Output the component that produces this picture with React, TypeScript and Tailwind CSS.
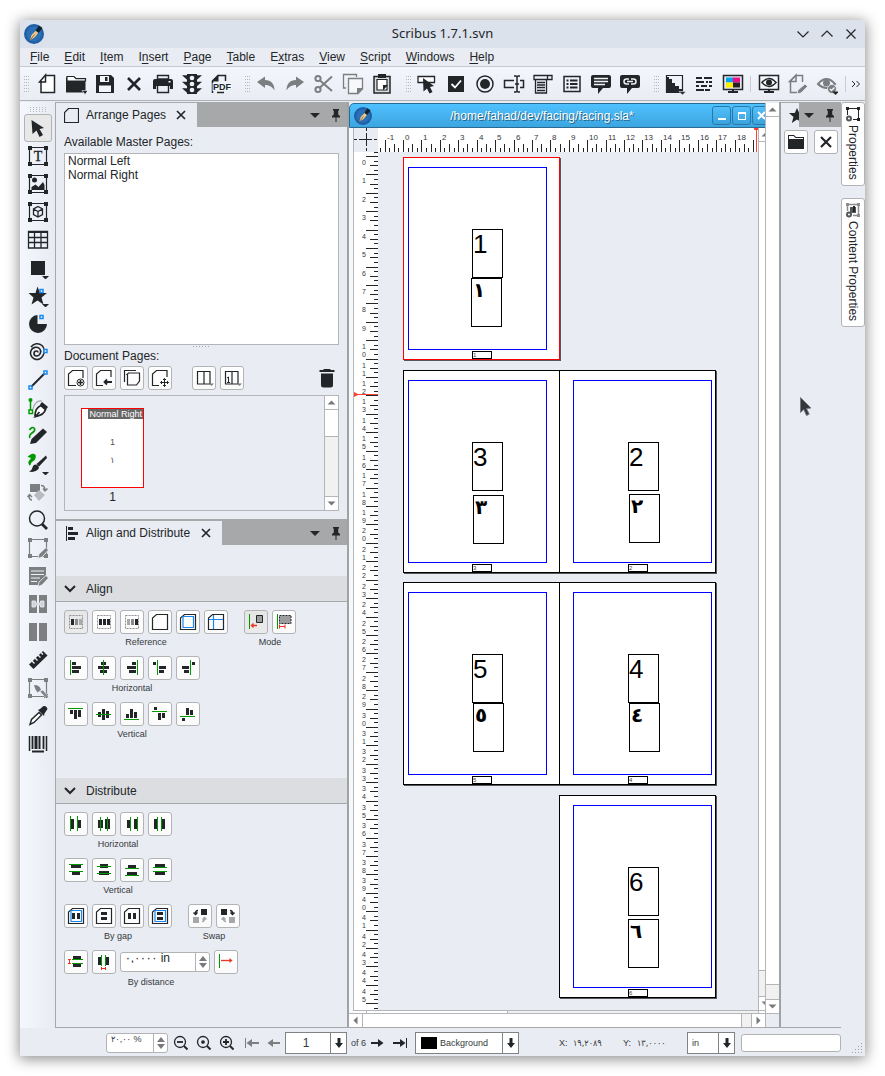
import React from "react";

const INK = "#232629";
const GRAY = "#7c7e80";
const GREEN = "#009a00";
const BLUE = "#1688f0";
const RED = "#ee3322";
const PALE = "#a6a7a9";

type Block = [string, number, number, number, number];

/* ---------- shared drawing helpers ---------- */

const Blocks = ({ items }: { items: Block[] }) => (
    <g shapeRendering="crispEdges">
        {items.map(([fill, x, y, w, h], i) => (
            <rect key={i} x={x} y={y} width={w} height={h} fill={fill} />
        ))}
    </g>
);

const Glyph = ({ children }: { children: React.ReactNode }) => (
    <svg
        width="22"
        height="22"
        viewBox="0 0 22 22"
        fill="none"
        stroke={INK}
        strokeWidth="1.5"
        className="shrink-0"
        aria-hidden="true"
    >
        {children}
    </svg>
);

const Handle = ({ x, y }: { x: number; y: number }) => (
    <rect x={x - 1.5} y={y - 1.5} width="3" height="3" fill="#fff" stroke={BLUE} strokeWidth="1.5" />
);

const FrameBox = ({ color = INK, children }: { color?: string; children?: React.ReactNode }) => (
    <g>
        <path d="M2.5 2.5H19.5V19.5H2.5Z" stroke={color} strokeWidth="1.2" />
        <path
            d="M1 1h4v4H1zM17 1h4v4h-4zM1 17h4v4H1zM17 17h4v4h-4z"
            fill={color}
            stroke="none"
        />
        {children}
    </g>
);

const Pencil = ({ color = GRAY }: { color?: string }) => (
    <path d="M11 21.5l1-4.5 7-6.5 2.5 2.5-6.5 7z" fill={color} stroke="#eef1f7" strokeWidth="0.8" />
);

const MoreArrow = () => <path d="M15 19h7l-3.500 3.500z" fill={INK} stroke="none" />;

const Feather = ({ size }: { size: number }) => (
    <svg width={size} height={size} viewBox="0 0 20 20" className="shrink-0" aria-hidden="true">
        <circle cx="10" cy="10" r="10" fill="#1f5fa5" />
        <circle cx="10" cy="10" r="7.500" fill="#2b6fb6" />
        <path d="M6 16.500L7.500 11L12 6.500L14.500 8.500L11 13Z" fill="#f0c987" />
        <path d="M6 16.500L10.500 10.500" stroke="#7b5a2c" strokeWidth="0.8" />
        <path d="M11.500 6.500L15 1.500L18.500 4L14.500 9Z" fill="#14202c" />
    </svg>
);

const Caret = () => (
    <svg width="10" height="5" viewBox="0 0 10 5" aria-hidden="true">
        <path d="M0 0h10L5 5z" fill={INK} />
    </svg>
);

const Pin = () => (
    <svg width="8" height="13" viewBox="0 0 8 13" aria-hidden="true">
        <path d="M1 0h6v1.500H6.200V5.500L8 7v1.500H0V7L1.800 5.500V1.500H1zM3.500 8.500h1V13h-1z" fill={INK} />
    </svg>
);

const Cross = () => (
    <svg width="10" height="10" viewBox="0 0 10 10" aria-hidden="true">
        <path d="M1 1l8 8M9 1L1 9" stroke={INK} strokeWidth="1.700" />
    </svg>
);

/* ---------- main toolbar ---------- */

const fileTools: [string, React.ReactNode][] = [
    ["New", <path d="M9.500 2.500H18.500V19.500H5V8M3.500 9L9.500 2V9Z" fill="#fff" key="a" />],
    [
        "Open",
        <g key="a">
            <path d="M1 4.500h8l2 2h9.500v13H1z" fill={INK} stroke="none" />
            <path d="M2 3.500h7l2 2.200h9.500V8H2z" fill="#fff" strokeWidth="1.2" />
            <path d="M17 17.500h6l-3 4z" fill={INK} stroke="#f0f3f9" strokeWidth="0.600" />
        </g>,
    ],
    [
        "Save",
        <g key="a">
            <path d="M2 2h15l3 3v15H2z" fill={INK} stroke="none" />
            <path d="M6 3h9v6H6zM5 12.500h12V19H5z" fill="#f2f5fa" stroke="none" />
            <path d="M11 4h2.500v4H11z" fill={INK} stroke="none" />
        </g>,
    ],
    ["Close", <path d="M5 5l12 12M17 5L5 17" strokeWidth="2.600" key="a" />],
    [
        "Print",
        <g key="a">
            <path d="M5.500 2.500h11V6h-11z" strokeWidth="1.400" />
            <path d="M1 8q0-2 2-2h16q2 0 2 2v8h-3v-3H4v3H1z" fill={INK} stroke="none" />
            <path d="M5.500 13v6.500h11V13" strokeWidth="1.400" />
            <path d="M16.500 8h2v1.500h-2z" fill="#fff" stroke="none" />
        </g>,
    ],
    [
        "Preflight",
        <g key="a">
            <path d="M6 1h10v20H6z" fill={INK} stroke="none" />
            <path d="M3 3h4v3.500zM3 9.500h4V13zM3 16h4v3.500zM19 3h-4v3.500zM19 9.500h-4V13zM19 16h-4v3.500z" fill={INK} />
            <circle cx="11" cy="5" r="2.300" fill="#eef1f7" stroke="none" />
            <circle cx="11" cy="11" r="2.300" fill="#eef1f7" stroke="none" />
            <circle cx="11" cy="17" r="2.300" fill="#eef1f7" stroke="none" />
        </g>,
    ],
    [
        "Export PDF",
        <g key="a">
            <path d="M2.500 20V8L8 2.500H15.500V8" />
            <path d="M1.500 8.500L8.500 1.500V8.500Z" fill={INK} stroke="none" />
            <path d="M7 19.500h7" />
            <text
                x="3"
                y="17"
                fontSize="9"
                fontWeight="700"
                fontFamily="Liberation Sans, sans-serif"
                fill={INK}
                stroke="#f2f5fa"
                strokeWidth="2"
                paintOrder="stroke"
            >
                PDF
            </text>
        </g>,
    ],
];

const editTools: [string, React.ReactNode][] = [
    ["Undo", <path d="M2 9L10 3.500V7C16 7 19.500 11 19.500 17.500C17 13.500 14 12 10 12V15Z" fill={GRAY} stroke="none" key="a" />],
    ["Redo", <path d="M20 9L12 3.500V7C6 7 2.500 11 2.500 17.500C5 13.500 8 12 12 12V15Z" fill={GRAY} stroke="none" key="a" />],
    [
        "Cut",
        <g stroke={GRAY} strokeWidth="2" key="a">
            <circle cx="5" cy="5.500" r="2.600" />
            <circle cx="5" cy="16.500" r="2.600" />
            <path d="M7 7.500L19 18M7 14.500L19 3.500" />
        </g>,
    ],
    [
        "Copy",
        <g stroke={GRAY} strokeWidth="1.300" key="a">
            <path d="M4 15H1.500V1.500H14.500V4" />
            <path d="M6.500 5.500H20.500V16L16 20.500H6.500Z" fill="#f6f8fc" />
            <path d="M21 15l-6 6v-6z" fill={GRAY} stroke="none" />
        </g>,
    ],
    [
        "Paste",
        <g key="a">
            <path d="M3 3.500H19V20H3Z" fill="#d8dade" />
            <path d="M6 6.500H16V17H6Z" fill="#fff" strokeWidth="1.200" />
            <path d="M7 1h8v4H7zM17 12l-5 5.500v-5.500z" fill={INK} stroke="none" />
        </g>,
    ],
];

const pdfTools: [string, React.ReactNode][] = [
    [
        "Push Button",
        <g key="a">
            <path d="M2 3.500H18.500V9.500H2Z" fill="#fff" strokeWidth="1.300" />
            <path d="M7 5l11 8-4 1 2.500 5-3 1.500-2.500-5-3.500 3z" fill={INK} stroke="none" />
        </g>,
    ],
    [
        "Check Box",
        <g key="a">
            <path d="M3 3h16v16H3z" fill={INK} stroke="none" />
            <path d="M6.500 11l3.500 3.500 6-7" stroke="#fff" strokeWidth="1.800" />
        </g>,
    ],
    [
        "Radio Button",
        <g key="a">
            <circle cx="11" cy="11" r="8" />
            <circle cx="11" cy="11" r="5" fill={INK} stroke="none" />
        </g>,
    ],
    [
        "Text Field",
        <g key="a">
            <path d="M11 7.500H1.500V14.500H11M17 7.500h3.500v7H17M14 4v14M11 3h2l1 1 1-1h2M11 19h2l1-1 1 1h2M12 11h4" />
        </g>,
    ],
    [
        "Combo Box",
        <g key="a">
            <path d="M2 2.500H20V6.500H2ZM15.500 2.500v4M3.500 6.500V20H14.500V6.500" strokeWidth="1.300" />
            <path d="M5 9.500h8M5 12h8M5 14.500h8M5 17.500h8" strokeWidth="1.500" />
        </g>,
    ],
    [
        "List Box",
        <g key="a">
            <path d="M3 3.500H19V18.500H3Z" />
            <path d="M5.500 7.500h2M5.500 11h2M5.500 14.500h2M9 7.500h7.500M9 11h7.500M9 14.500h7.500" strokeWidth="2" />
        </g>,
    ],
    [
        "Text Annotation",
        <g key="a">
            <path d="M3 2h16q2 0 2 2v9q0 2-2 2h-6l-5 6v-6H3q-2 0-2-2V4q0-2 2-2z" fill={INK} stroke="none" />
            <path d="M4 5.500h14M4 8.500h14M4 11.500h11" stroke="#eef1f7" strokeWidth="1.300" />
        </g>,
    ],
    [
        "Link Annotation",
        <g key="a">
            <path d="M3 2h16q2 0 2 2v9q0 2-2 2h-6l-5 6v-6H3q-2 0-2-2V4q0-2 2-2z" fill={INK} stroke="none" />
            <path
                d="M10 6H7.500a2.500 2.500 0 0 0 0 5H10M12 6h2.500a2.500 2.500 0 0 1 0 5H12M8 8.500h6"
                stroke="#eef1f7"
                strokeWidth="1.500"
            />
        </g>,
    ],
];

const viewTools: [string, React.ReactNode][] = [
    [
        "Image Visibility",
        <g key="a">
            <path d="M2.500 2.500H18.500V19.500H2.500Z" strokeWidth="1.200" />
            <path d="M2 4h3v2h3v4h3v3h4v3h3v4H2z" fill={INK} stroke="none" />
            <path d="M15 18.500h7l-3.500 3.500z" fill={INK} stroke="#f0f3f9" strokeWidth="0.600" />
        </g>,
    ],
    [
        "Baseline Grid",
        <path
            d="M3 5h6M11 5h8M3 9h8M13 9h2M16 9h3M3 13h3M8 13h6M16 13h3M3 17h8M12 17h5"
            strokeWidth="2.200"
            key="a"
        />,
    ],
    [
        "Color Management",
        <g key="a">
            <path d="M1.500 2.500H20.500V16.500H1.500Z" fill="#e4e7ec" />
            <path d="M4 4.500h7v5H4z" fill="#00a4f0" stroke="none" />
            <path d="M11 4.500h7v5h-7z" fill="#ee0a8a" stroke="none" />
            <path d="M4 9.500h7v5H4z" fill="#ffee00" stroke="none" />
            <path d="M11 9.500h7v5h-7z" fill="#222" stroke="none" />
            <path d="M6 19h10M11 16v3" strokeWidth="2" />
        </g>,
    ],
];

const previewTools: [string, React.ReactNode][] = [
    [
        "Preview Mode",
        <g key="a">
            <path d="M1.500 2.500H20.500V16.500H1.500Z" fill="#f4f6fa" />
            <path d="M4 9.500Q11 1.500 18 9.500Q11 17.500 4 9.500Z" strokeWidth="1.600" />
            <circle cx="11" cy="9.500" r="3" fill={INK} stroke="none" />
            <path d="M6 19h10M11 16v3" strokeWidth="2" />
        </g>,
    ],
    [
        "Edit in Preview",
        <g stroke={GRAY} key="a">
            <path d="M10 19.500H3.500V8L9 2.500H15.500V9M2.500 8.500L9 2V8.500Z" />
            <path d="M10 21l1-4 7-6 2.500 2.500-6.500 6.500z" fill={GRAY} stroke="#eef1f7" strokeWidth="0.800" />
        </g>,
    ],
    [
        "Display Mode",
        <g key="a">
            <path d="M2 11Q10.500 1 19 11Q10.500 19 2 11Z" stroke={GRAY} strokeWidth="2" />
            <circle cx="10.500" cy="10" r="3.500" fill={GRAY} stroke="none" />
            <circle cx="16" cy="16" r="4.500" fill={GRAY} stroke="#eef1f7" strokeWidth="0.800" />
            <path d="M14 16l1.500 1.500 3-3" stroke="#fff" strokeWidth="1.200" />
            <path d="M16 18.500h7l-3.500 3.500z" fill={INK} stroke="none" />
        </g>,
    ],
];

const ToolRow = ({ tools }: { tools: [string, React.ReactNode][] }) => (
    <>
        {tools.map(([name, glyph]) => (
            <button
                key={name}
                type="button"
                aria-label={name}
                className="w-[29px] h-7 shrink-0 flex items-center justify-center"
            >
                <Glyph>{glyph}</Glyph>
            </button>
        ))}
    </>
);

const Grip = () => (
    <svg width="5" height="18" viewBox="0 0 5 18" aria-hidden="true" shapeRendering="crispEdges">
        <path d="M0.500 1v17M2.500 1v17M4.500 1v17" stroke="#b4b7bc" strokeDasharray="1 2" />
    </svg>
);

const MainToolbar = () => (
    <div
        role="toolbar"
        className="h-[34px] flex items-center overflow-hidden bg-gradient-to-b from-[#f3f6fc] to-[#e9ecf2] border-b border-[#aeb1b5]"
    >
        <span className="w-3 shrink-0 flex justify-center">
            <Grip />
        </span>
        <ToolRow tools={fileTools} />
        <span className="w-4 shrink-0 flex justify-end pr-px">
            <Grip />
        </span>
        <ToolRow tools={editTools} />
        <span className="w-4 shrink-0 flex justify-end pr-px">
            <Grip />
        </span>
        <ToolRow tools={pdfTools} />
        <span className="w-4 shrink-0 flex justify-end pr-px">
            <Grip />
        </span>
        <ToolRow tools={viewTools} />
        <span className="w-[7px] shrink-0 flex justify-center">
            <span className="w-px h-4 bg-[#c9ccd1]" />
        </span>
        <ToolRow tools={previewTools} />
        <span className="w-px h-4 shrink-0 bg-[#c9ccd1] ml-1" />
        <button type="button" aria-label="More tools" className="px-[5px] shrink-0">
            <svg width="10" height="8" viewBox="0 0 10 8" fill="none" stroke={INK} aria-hidden="true">
                <path d="M1 1l3 3-3 3M5.500 1l3 3-3 3" />
            </svg>
        </button>
    </div>
);

/* ---------- toolbox ---------- */

const toolbox: [string, React.ReactNode][] = [
    ["Select Item", <path d="M4.500 3L17 11l-4.500 1 3.500 6-3.500 2L9.500 13.500 5.500 17z" fill={INK} stroke="none" key="a" />],
    [
        "Text Frame",
        <FrameBox key="a">
            <text
                x="11"
                y="16"
                fontSize="14"
                textAnchor="middle"
                fontFamily="Liberation Serif, serif"
                fill={INK}
                strokeWidth="0.300"
            >
                T
            </text>
        </FrameBox>,
    ],
    [
        "Image Frame",
        <FrameBox key="a">
            <circle cx="7.500" cy="7" r="2.500" fill={INK} stroke="none" />
            <path d="M4.500 17v-3l4-2.500 3 2.500 4.500-5 1.500 3v5z" fill={INK} stroke="none" />
        </FrameBox>,
    ],
    [
        "Render Frame",
        <FrameBox key="a">
            <path d="M11 5.500l4.500 2.500v5.500L11 16l-4.500-2.500V8zM6.500 8l4.500 2.500L15.500 8M11 10.500V16" strokeWidth="1.300" />
        </FrameBox>,
    ],
    [
        "Table",
        <g key="a">
            <path d="M1.500 2.500H20.500V19H1.500ZM1.500 8.500h19M1.500 13.500h19M7.500 3v16M14 3v16" strokeWidth="1.300" />
            <path d="M1 3h20" strokeWidth="2" />
        </g>,
    ],
    [
        "Shape",
        <g key="a">
            <path d="M4 4h14v14H4z" fill={INK} stroke="none" />
            <MoreArrow />
        </g>,
    ],
    [
        "Polygon",
        <g key="a">
            <path
                d="M10.500 1.500l2.500 6.500h7l-5.500 4.500 2 7-6-4-6 4 2-7L1.500 8h7z"
                fill={INK}
                stroke="none"
            />
            <Handle x={14.500} y={6} />
            <MoreArrow />
        </g>,
    ],
    [
        "Arc",
        <g key="a">
            <path d="M10.500 2v9H20a9 9 0 1 1-9.500-9z" fill={INK} stroke="none" />
            <Handle x={14.500} y={4} />
        </g>,
    ],
    [
        "Spiral",
        <g key="a">
            <path
                d="M11 11.500a1.500 1.500 0 0 0-1.500-1.500a2.500 2.500 0 0 0 0 5a4.500 4.500 0 0 0 3-7.500a5.500 5.500 0 0 0-8.500 2a6.500 6.500 0 0 0 12 5a8 8 0 0 0-1-10a7.500 7.500 0 0 0-11 1.500"
                strokeWidth="1.600"
            />
            <Handle x={18.500} y={10} />
        </g>,
    ],
    [
        "Line",
        <g key="a">
            <path d="M4 18L18 4" strokeWidth="2" />
            <Handle x={3.500} y={18.500} />
            <Handle x={18.500} y={3.500} />
        </g>,
    ],
    [
        "Bezier Curve",
        <g key="a">
            <path d="M3.500 4v10" stroke={GREEN} strokeWidth="1.500" />
            <circle cx="3.500" cy="3" r="2" fill={GREEN} stroke="none" />
            <path d="M2 13h3.500v3.500H2z" fill="#fff" stroke={GREEN} />
            <path d="M6 12Q8 3 15 4" stroke={PALE} strokeWidth="1.200" />
            <path d="M8 19Q8 11 14 8.500l4.500 4Q17 18 8.500 19.500L12.500 15" fill="#fff" strokeWidth="1.800" />
            <path d="M15 5l6 5-2 2.500-6-5z" fill={INK} stroke="none" />
        </g>,
    ],
    [
        "Freehand Line",
        <g key="a">
            <path d="M2.500 5Q5 1 7.500 3.500Q8.500 6 5 8Q1.500 10.500 3 13" stroke={GREEN} strokeWidth="1.600" />
            <path d="M3 19l1.500-5L16 3.500l4 3.500L9 18z" fill={INK} stroke="none" />
        </g>,
    ],
    [
        "Calligraphic Line",
        <g key="a">
            <path d="M2 3.500Q6 0 8 2.500Q8.500 6 5 8Q2.500 10 3 12Q1 9 3.500 7Q6.500 4.500 2 3.500Z" fill={GREEN} stroke={GREEN} />
            <path d="M19 2.500l1 2.500-8 8.500-2.500-2.500z" fill={INK} stroke="none" />
            <path d="M9 11.500q4 1.500 2.500 4.500Q8 20 2 18.500q3-1 3.500-4t3.500-3z" fill={INK} stroke="none" />
            <MoreArrow />
        </g>,
    ],
    [
        "Rotate Item",
        <g key="a">
            <path d="M3 3h10v8H3z" fill={GRAY} stroke="none" />
            <path d="M12 9l6 5-6 6-5-6z" fill="#b9bbbe" stroke="none" />
            <path d="M14 4.500q4 0 4 5M16 7.500l2 2.500 2.500-2.500M5 19q-3 0-3-5M0.500 16L2.500 13.500 5 16" stroke={GRAY} />
        </g>,
    ],
    [
        "Zoom",
        <g key="a">
            <circle cx="10" cy="9.500" r="7.500" />
            <path d="M15 15l5 5" strokeWidth="2.800" />
        </g>,
    ],
    [
        "Edit Contents",
        <FrameBox color={GRAY} key="a">
            <Pencil />
        </FrameBox>,
    ],
    [
        "Edit Text",
        <g key="a">
            <path d="M2 2h17v13l-5 5H2z" fill={GRAY} stroke="none" />
            <path d="M4 6h13M4 9.500h13M4 13h9M4 16.500h6" stroke="#eef1f7" strokeWidth="1.200" />
            <Pencil />
        </g>,
    ],
    [
        "Link Frames",
        <g key="a">
            <path d="M2 2h8v18H2zM12 2h8v18h-8z" fill={GRAY} stroke="none" />
            <path d="M5 8h3.500v2h5V8H17v6h-3.500v-2h-5v2H5z" fill="#cfd2d6" stroke="#eef1f7" strokeWidth="0.800" />
        </g>,
    ],
    ["Unlink Frames", <path d="M2 2h8v18H2zM12 2h8v18h-8z" fill={GRAY} stroke="none" key="a" />],
    [
        "Measurements",
        <g key="a">
            <path d="M2 15.500L16 2l4.500 4.500L6.500 20z" fill={INK} stroke="none" />
            <path d="M5 12l2.500 2.500M8 9l2.500 2.500M11 6l2.500 2.500M14 3.500L16 5.500" stroke="#eef1f7" strokeWidth="1.300" />
        </g>,
    ],
    [
        "Copy Properties",
        <FrameBox color={GRAY} key="a">
            <path d="M7 8q6 0 7 5l-3.500 2.500Q8 13 7 8z" fill={GRAY} stroke="none" />
            <path d="M13 14.500l3-1.500 5.500 7-2 1.500z" fill={GRAY} stroke="#eef1f7" strokeWidth="0.600" />
        </FrameBox>,
    ],
    [
        "Eye Dropper",
        <g key="a">
            <path d="M3 19.500l1.500-5 7.500-7 2.500 2.500-7.500 7.500z" fill="#fff" strokeWidth="1.400" />
            <path d="M11 5l2-1 3.500-3q3-0.500 4 3L17.500 8.500l-0.500 2.500z" fill={INK} stroke="none" />
        </g>,
    ],
    [
        "Barcode",
        <g key="a">
            <path d="M2.500 3v15M19.500 3v15" />
            <path d="M5.500 3v13M16.500 3v13" strokeWidth="1.800" />
            <path d="M9 3v13" strokeWidth="3" />
            <path d="M12.500 3v13" strokeWidth="2" />
            <path d="M5 18.500h12" strokeWidth="2" />
        </g>,
    ],
];

const Toolbox = () => (
    <div
        role="toolbar"
        aria-label="Tools"
        className="w-[35px] shrink-0 flex flex-col items-center bg-gradient-to-r from-[#f4f7fd] to-[#e8ebf2]"
    >
        <svg width="17" height="12" viewBox="0 0 17 12" aria-hidden="true" shapeRendering="crispEdges">
            <path d="M1 5.500h16M1 7.500h16M1 9.500h16" stroke="#b4b7bc" strokeDasharray="1 2" />
        </svg>
        {toolbox.map(([name, glyph], i) => (
            <button
                key={name}
                type="button"
                aria-label={name}
                aria-pressed={i === 0}
                className="size-7 shrink-0 flex items-center justify-center rounded-[3px] border border-transparent aria-pressed:bg-[#e8e8e8] aria-pressed:border-[#b1b3b5]"
            >
                <Glyph>{glyph}</Glyph>
            </button>
        ))}
    </div>
);

/* ---------- dock panels ---------- */

const ButtonGlyph = ({ children }: { children: React.ReactNode }) => (
    <svg width="22" height="22" viewBox="1 1 22 22" fill="none" stroke={INK} className="shrink-0" aria-hidden="true">
        {children}
    </svg>
);

const IconButton = ({
    name,
    pressed = false,
    children,
}: {
    name: string;
    pressed?: boolean;
    children: React.ReactNode;
}) => (
    <button
        type="button"
        aria-label={name}
        aria-pressed={pressed}
        className="size-6 shrink-0 flex items-center justify-center rounded-[3px] border border-[#b1b3b5] bg-gradient-to-b from-white to-[#fafafb] aria-pressed:from-[#e6e6e6] aria-pressed:to-[#ebebeb]"
    >
        <ButtonGlyph>{children}</ButtonGlyph>
    </button>
);

const PageShape = () => <path d="M4.500 19.500V8L8.500 4.500H19.500V19.500Z" strokeWidth="1.200" />;
const MarginShape = () => <path d="M7 6.500H17.500V17.500H7Z" stroke={BLUE} strokeWidth="1.200" />;

const DockTitle = ({
    title,
    width,
    children,
}: {
    title: string;
    width: string;
    children: React.ReactNode;
}) => (
    <div className="h-6 shrink-0 flex bg-[#a7a8a9]">
        <div className={`${width} bg-[#e9ecf2] flex items-center pl-2 pr-[11px]`}>
            <span className="w-[22px] shrink-0">{children}</span>
            <h2>{title}</h2>
            <button type="button" aria-label={`Close ${title}`} className="ml-auto">
                <Cross />
            </button>
        </div>
        <div className="ml-auto flex items-center gap-3 pr-[7px]">
            <button type="button" aria-label="Dock menu">
                <Caret />
            </button>
            <button type="button" aria-label="Pin dock">
                <Pin />
            </button>
        </div>
    </div>
);

const ScrollArrow = ({ dir }: { dir: "up" | "down" | "left" | "right" }) => {
    const shapes = {
        up: "M2.500 8.500h8l-4-4z",
        down: "M2.500 4.500h8l-4 4z",
        left: "M8.500 2.500v8l-4-4z",
        right: "M4.500 2.500v8l4-4z",
    };

    return (
        <button type="button" aria-label={`Scroll ${dir}`} className="size-[13px] shrink-0 bg-white">
            <svg width="13" height="13" viewBox="0 0 13 13" aria-hidden="true">
                <path d={shapes[dir]} fill="#77797c" />
            </svg>
        </button>
    );
};

const ArrangePages = () => (
    <section className="flex flex-col border-t border-[#a7a8a9]">
        <DockTitle title="Arrange Pages" width="w-[141px]">
            <svg width="15" height="15" viewBox="0 0 15 15" fill="none" stroke={INK} aria-hidden="true">
                <path d="M0.500 14.500V4.500L4.500 0.500H14.500V14.500Z" strokeWidth="1.200" />
            </svg>
        </DockTitle>
        <div className="px-2 pt-[7px]">
            <h3 className="leading-4">Available Master Pages:</h3>
            <ul className="mt-[3px] h-48 bg-white border border-[#b3b5b8] pl-[3px] leading-[14px]">
                <li>Normal Left</li>
                <li>Normal Right</li>
            </ul>
            <div className="flex justify-center h-[3px]">
                <svg width="17" height="3" viewBox="0 0 17 3" aria-hidden="true" shapeRendering="crispEdges">
                    <path d="M0 1.500h17" stroke="#a4a7ab" strokeDasharray="1 2" />
                </svg>
            </div>
            <h3 className="leading-4">Document Pages:</h3>
            <div className="flex items-center gap-1 mt-[2px]">
                <IconButton name="Insert page">
                    <path d="M12 19.500H4.500V8L8.500 4.500H19V12" strokeWidth="1.200" />
                    <circle cx="16.500" cy="16.500" r="3.500" fill="#fff" />
                    <path d="M14 16.500h5M16.500 14v5" strokeWidth="1.500" />
                </IconButton>
                <IconButton name="Import page">
                    <path d="M11 19.500H4.500V8L8.500 4.500H19V11" strokeWidth="1.200" />
                    <path d="M20 16h-7M15 13.500L12.500 16l2.500 2.500" strokeWidth="1.800" />
                </IconButton>
                <IconButton name="Duplicate page">
                    <path d="M4.500 16V4.500H16M7.500 18.500V8.500H7L8.500 7H19.500V15L16.500 19H7.500Z" strokeWidth="1.200" />
                </IconButton>
                <IconButton name="Move page">
                    <path d="M11 19.500H4.500V8L8.500 4.500H19V11" strokeWidth="1.200" />
                    <path d="M16.500 12.500v8M12.500 16.500h8M15 14l1.500-1.500L18 14M15 19l1.500 1.500L18 19M14 15l-1.500 1.500L14 18M19 15l1.500 1.500L19 18" />
                </IconButton>
                <span className="w-3" />
                <IconButton name="Page layout">
                    <path d="M5.500 5.500H18V18H5.500ZM12 5.500V18" strokeWidth="1.200" />
                    <path d="M17 17.500h5l-2.500 2.500z" fill={GRAY} stroke="none" />
                </IconButton>
                <IconButton name="First page position">
                    <path d="M5.500 5.500H18V18H5.500ZM12 5.500V18" strokeWidth="1.200" />
                    <path d="M7 12l1.500-1v5.500M7 16.500h3" />
                    <path d="M17 17.500h5l-2.500 2.500z" fill={GRAY} stroke="none" />
                </IconButton>
                <button type="button" aria-label="Delete page" className="ml-auto mr-1">
                    <svg width="16" height="20" viewBox="0 0 16 20" fill={INK} aria-hidden="true">
                        <path d="M4.500 1h7v1H15.500v2H0.500V2H4.500zM2 5.500h12V17q0 2.500-2.500 2.500h-7Q2 19.500 2 17z" />
                    </svg>
                </button>
            </div>
            <div className="mt-[5px] h-[116px] flex border border-[#b3b5b8]">
                <div className="flex-1 pl-4 pt-3">
                    <div className="w-[63px] flex flex-col items-center">
                        <div className="w-full h-20 bg-white border border-[#ff0000] flex flex-col items-end">
                            <span className="bg-[#666] text-white text-[9px] leading-[10px] px-px whitespace-nowrap">
                                Normal Right
                            </span>
                            <span className="self-center mt-[18px] text-[9px] leading-[10px] text-[#555]">1</span>
                            <span
                                lang="ar"
                                className="self-center mt-2 text-[9px] leading-[10px] text-[#555] font-['DejaVu_Sans',sans-serif]"
                            >
                                ١
                            </span>
                        </div>
                        <span className="leading-[18px]">1</span>
                    </div>
                </div>
                <div className="w-[14px] flex flex-col border-l border-[#b3b5b8]">
                    <ScrollArrow dir="up" />
                    <div className="h-7 bg-white border-y border-[#b3b5b8]" />
                    <div className="flex-1 bg-[#f1f1f1] border-b border-[#b3b5b8]" />
                    <ScrollArrow dir="down" />
                </div>
            </div>
        </div>
    </section>
);

const SectionHeader = ({ title }: { title: string }) => (
    <h3 className="h-[26px] shrink-0 bg-[#dbdde1] border-b border-[#a7a8a9]">
        <button type="button" aria-expanded="true" className="w-full h-full flex items-center pl-2">
            <svg width="12" height="8" viewBox="0 0 12 8" fill="none" stroke={INK} strokeWidth="2" aria-hidden="true">
                <path d="M1 1l5 5 5-5" />
            </svg>
            <span className="ml-[10px]">{title}</span>
        </button>
    </h3>
);

const Group = ({ label, children }: { label: string; children: React.ReactNode }) => (
    <div role="group" aria-label={label} className="flex flex-col items-center h-[46px]">
        <div className="flex items-center gap-1">{children}</div>
        <span className="text-[9px] leading-4 text-[#35393d]">{label}</span>
    </div>
);

const BlockButtons = ({ sets }: { sets: [string, Block[]][] }) => (
    <>
        {sets.map(([name, items]) => (
            <IconButton key={name} name={name}>
                <g stroke="none">
                    <Blocks items={items} />
                </g>
            </IconButton>
        ))}
    </>
);

const alignH: [string, Block[]][] = [
    ["Align left", [[INK, 8, 6, 4, 3], [INK, 8, 10, 9, 3], [INK, 8, 14, 7, 3], [GREEN, 6, 4, 1, 15]]],
    ["Align center", [[INK, 9, 6, 5, 3], [INK, 6, 10, 11, 3], [INK, 8, 14, 7, 3], [GREEN, 11, 4, 1, 15]]],
    ["Align right", [[INK, 12, 6, 4, 3], [INK, 7, 10, 9, 3], [INK, 9, 14, 7, 3], [GREEN, 17, 4, 1, 15]]],
    ["Align to right of", [[INK, 5, 6, 3, 3], [INK, 11, 10, 7, 3], [INK, 11, 14, 5, 3], [GREEN, 9, 4, 1, 15]]],
    ["Align to left of", [[INK, 16, 6, 3, 3], [INK, 6, 10, 7, 3], [INK, 8, 14, 5, 3], [GREEN, 14, 4, 1, 15]]],
];

const alignV: [string, Block[]][] = [
    ["Align top", [[INK, 6, 8, 3, 4], [INK, 10, 8, 3, 9], [INK, 14, 8, 3, 7], [GREEN, 4, 6, 15, 1]]],
    ["Align middle", [[INK, 6, 10, 3, 5], [INK, 10, 7, 3, 11], [INK, 14, 9, 3, 7], [GREEN, 4, 12, 15, 1]]],
    ["Align bottom", [[INK, 6, 12, 3, 4], [INK, 10, 7, 3, 9], [INK, 14, 10, 3, 6], [GREEN, 4, 17, 15, 1]]],
    ["Align below", [[INK, 6, 5, 3, 3], [INK, 10, 11, 3, 7], [INK, 14, 11, 3, 5], [GREEN, 4, 9, 15, 1]]],
    ["Align above", [[INK, 6, 16, 3, 3], [INK, 10, 6, 3, 7], [INK, 14, 8, 3, 5], [GREEN, 4, 14, 15, 1]]],
];

const distH: [string, Block[]][] = [
    ["Distribute lefts", [[INK, 7, 7, 3, 10], [INK, 14, 8, 3, 8], [GREEN, 6, 4, 1, 15], [GREEN, 13, 4, 1, 15]]],
    ["Distribute centers", [[INK, 6, 8, 5, 8], [INK, 13, 7, 5, 10], [GREEN, 8, 5, 1, 14], [GREEN, 15, 5, 1, 14]]],
    ["Distribute rights", [[INK, 7, 8, 3, 8], [INK, 14, 7, 3, 10], [GREEN, 10, 5, 1, 14], [GREEN, 17, 5, 1, 14]]],
    ["Equal horizontal gaps", [[INK, 6, 7, 3, 10], [INK, 14, 7, 3, 10], [GREEN, 9, 5, 1, 14], [GREEN, 13, 5, 1, 14]]],
];

const distV: [string, Block[]][] = [
    ["Distribute tops", [[INK, 7, 7, 10, 3], [INK, 8, 14, 8, 3], [GREEN, 5, 6, 14, 1], [GREEN, 5, 13, 14, 1]]],
    ["Distribute middles", [[INK, 8, 6, 8, 4], [INK, 7, 13, 10, 4], [GREEN, 5, 8, 14, 1], [GREEN, 5, 15, 14, 1]]],
    ["Distribute bottoms", [[INK, 8, 7, 8, 3], [INK, 7, 14, 10, 3], [GREEN, 5, 10, 14, 1], [GREEN, 5, 17, 14, 1]]],
    ["Equal vertical gaps", [[INK, 7, 6, 10, 3], [INK, 7, 14, 10, 3], [GREEN, 5, 9, 14, 1], [GREEN, 5, 13, 14, 1]]],
];

const distanceSets: [string, Block[]][] = [
    [
        "Vertical distance",
        [[INK, 9, 6, 8, 3], [INK, 9, 14, 8, 3], [GREEN, 8, 9, 11, 1], [GREEN, 8, 13, 11, 1], [RED, 5, 9, 1, 5], [RED, 4, 9, 3, 1], [RED, 4, 13, 3, 1]],
    ],
    [
        "Horizontal distance",
        [[INK, 6, 7, 3, 8], [INK, 14, 7, 3, 8], [GREEN, 9, 5, 1, 11], [GREEN, 13, 5, 1, 11], [RED, 9, 18, 5, 1], [RED, 9, 17, 1, 3], [RED, 13, 17, 1, 3]],
    ],
];

const SelectionShape = ({ bars }: { bars: string[] }) => (
    <>
        <path d="M5.500 5.500H18.500V18.500H5.500Z" stroke="#8d8f92" strokeDasharray="2 1" />
        <g stroke="none">
            <Blocks items={bars.map((fill, i) => [fill, 7 + i * 4, 9, 3, 6] as Block)} />
        </g>
    </>
);

const SpinArrows = () => (
    <span className="w-[14px] shrink-0 self-stretch flex flex-col items-center justify-center gap-[2px] border-l border-[#b1b3b5]">
        <button type="button" aria-label="Increase">
            <svg width="8" height="5" viewBox="0 0 8 5" className="block" aria-hidden="true">
                <path d="M0 5h8L4 0z" fill="#77797c" />
            </svg>
        </button>
        <button type="button" aria-label="Decrease">
            <svg width="8" height="5" viewBox="0 0 8 5" className="block" aria-hidden="true">
                <path d="M0 0h8L4 5z" fill="#77797c" />
            </svg>
        </button>
    </span>
);

const AlignDistribute = () => (
    <section className="flex-1 flex flex-col border-t-2 border-[#a7a8a9] mt-2">
        <DockTitle title="Align and Distribute" width="w-[166px]">
            <svg width="14" height="15" viewBox="-2 0 14 15" fill={INK} shapeRendering="crispEdges" aria-hidden="true">
                <path d="M0 0h1v15H0zM2 1h5v3H2zM2 6h10v3H2zM2 11h7v3H2z" />
            </svg>
        </DockTitle>
        <div className="mt-[31px] flex flex-col">
            <SectionHeader title="Align" />
            <div className="px-2 pt-2 flex flex-col items-start h-[176px]">
                <div className="flex gap-4">
                    <Group label="Reference">
                        <IconButton name="First selected" pressed>
                            <SelectionShape bars={[INK, "#88898b", "#a9aaac"]} />
                        </IconButton>
                        <IconButton name="Selection">
                            <SelectionShape bars={[INK, INK, INK]} />
                        </IconButton>
                        <IconButton name="Last selected">
                            <SelectionShape bars={["#a9aaac", "#88898b", INK]} />
                        </IconButton>
                        <IconButton name="Page">
                            <PageShape />
                        </IconButton>
                        <IconButton name="Margins">
                            <PageShape />
                            <MarginShape />
                        </IconButton>
                        <IconButton name="Guide">
                            <PageShape />
                            <path d="M9.500 5V19M5 9.500H19" stroke={BLUE} strokeWidth="1.200" />
                        </IconButton>
                    </Group>
                    <Group label="Mode">
                        <IconButton name="Move items" pressed>
                            <path d="M5.500 4V19" stroke={GREEN} />
                            <path d="M12.500 5.500H18.500V12.500H12.500Z" fill="#9b9c9e" />
                            <path d="M13 15.500H8M9.500 13.500l-2 2 2 2" stroke={RED} strokeWidth="1.300" />
                        </IconButton>
                        <IconButton name="Resize items">
                            <path d="M5.500 4V19" stroke={GREEN} />
                            <path d="M7.500 5.500H19V13.500H7.500Z" fill="#9b9c9e" strokeDasharray="2 1" />
                            <path d="M7.500 16.500H13M7.500 14.500v4M13 14.500v4" stroke={RED} />
                        </IconButton>
                    </Group>
                </div>
                <Group label="Horizontal">
                    <BlockButtons sets={alignH} />
                </Group>
                <Group label="Vertical">
                    <BlockButtons sets={alignV} />
                </Group>
            </div>
            <SectionHeader title="Distribute" />
            <div className="px-2 pt-2 flex flex-col items-start">
                <Group label="Horizontal">
                    <BlockButtons sets={distH} />
                </Group>
                <Group label="Vertical">
                    <BlockButtons sets={distV} />
                </Group>
                <div className="flex gap-4">
                    <Group label="By gap">
                        <IconButton name="Gap to margins, horizontal">
                            <PageShape />
                            <MarginShape />
                            <path d="M8 9h3v6H8zM13 9h3v6h-3z" fill={INK} stroke="none" />
                        </IconButton>
                        <IconButton name="Gap to page, vertical">
                            <PageShape />
                            <path d="M9 8h6v3H9zM9 13h6v3H9z" fill={INK} stroke="none" />
                        </IconButton>
                        <IconButton name="Gap to page, horizontal">
                            <PageShape />
                            <path d="M8 9h3v6H8zM13 9h3v6h-3z" fill={INK} stroke="none" />
                        </IconButton>
                        <IconButton name="Gap to margins, vertical">
                            <PageShape />
                            <MarginShape />
                            <path d="M9 8h6v3H9zM9 13h6v3H9z" fill={INK} stroke="none" />
                        </IconButton>
                    </Group>
                    <Group label="Swap">
                        <IconButton name="Swap left">
                            <path d="M13 5h6v6h-6z" fill={INK} stroke="none" />
                            <path d="M5 13h6v6H5z" fill={PALE} stroke="none" />
                            <path d="M10 6.500q-2.500 0-2.500 3M5.500 8.500l2 2 2-2" strokeWidth="1.500" />
                            <path d="M14 17.500q2.500 0 2.500-3M14.500 15.500l2-2 2 2" stroke={PALE} strokeWidth="1.500" />
                        </IconButton>
                        <IconButton name="Swap right">
                            <path d="M5 5h6v6H5z" fill={INK} stroke="none" />
                            <path d="M13 13h6v6h-6z" fill={PALE} stroke="none" />
                            <path d="M14 6.500q2.500 0 2.500 3M14.500 8.500l2 2 2-2" strokeWidth="1.500" />
                            <path d="M10 17.500q-2.500 0-2.500-3M5.500 15.500l2-2 2 2" stroke={PALE} strokeWidth="1.500" />
                        </IconButton>
                    </Group>
                </div>
                <Group label="By distance">
                    <BlockButtons sets={distanceSets} />
                    <span className="w-[90px] h-5 flex items-start overflow-hidden bg-white border border-[#b1b3b5] rounded-[3px]">
                        <input
                            type="text"
                            aria-label="Distance"
                            defaultValue="٠,٠٠٠٠ in"
                            className="min-w-0 flex-1 h-[10px] pl-1 leading-[10px] outline-none font-['Liberation_Sans','DejaVu_Sans_Condensed','DejaVu_Sans',sans-serif]"
                        />
                        <SpinArrows />
                    </span>
                    <IconButton name="Apply distance">
                        <path d="M5.500 4V18" stroke={GREEN} />
                        <path d="M7 10.500H17" stroke={RED} strokeWidth="1.300" />
                        <path d="M15.500 8l3 2.500-3 2.500z" fill={RED} stroke="none" />
                    </IconButton>
                </Group>
            </div>
        </div>
    </section>
);

/* ---------- document window ---------- */

const INCH = 18.42;
const range = (from: number, to: number) => Array.from({ length: to - from + 1 }, (_, i) => from + i);

const HorizontalRuler = () => (
    <svg
        width="400"
        height="24"
        viewBox="0 0 400 24"
        className="block"
        fontFamily="Liberation Sans, sans-serif"
        fontSize="8"
        fill="#35393d"
        aria-hidden="true"
    >
        {range(-5, 80).map((q) => {
            const x = Math.round(25 + (q * INCH) / 4);
            const top = q % 4 === 0 ? 12 : q % 2 === 0 ? 16 : 20;

            return <rect key={q} x={x} y={top} width="1" height={24 - top} fill={INK} />;
        })}
        {range(-1, 18).map((n) => (
            <text key={n} x={Math.round(27 + n * INCH)} y="12">
                {n}
            </text>
        ))}
        <path d="M376 0h5v2h-2v22h-1V2h-2z" fill="#ff4030" />
    </svg>
);

const VerticalRuler = () => (
    <svg
        width="24"
        height="859"
        viewBox="0 0 24 859"
        className="block"
        fontFamily="Liberation Sans, sans-serif"
        fontSize="7"
        fill="#35393d"
        aria-hidden="true"
    >
        {range(0, 186).map((q) => {
            const y = Math.round(4 + (q * INCH) / 4);
            const left = q % 4 === 0 ? 12 : q % 2 === 0 ? 16 : 20;

            return <rect key={q} x={left} y={y} width={24 - left} height="1" fill={INK} />;
        })}
        <rect x="20" y="0" width="4" height="1" fill={INK} />
        {range(0, 45).map((n) =>
            String(n)
                .split("")
                .map((digit, i) => (
                    <text key={`${n}-${i}`} x="8" y={Math.round(13 + n * INCH) + i * 8}>
                        {digit}
                    </text>
                ))
        )}
        <path d="M0 240l5 2.500-5 2.500zM4 242h20v1H4z" fill="#ff4030" />
    </svg>
);

type DocPage = {
    digit: string;
    arabic: string;
    x: number;
    y: number;
    side: "left" | "right";
    current?: boolean;
    arabicX: number;
    arabicY: number;
};

const docPages: DocPage[] = [
    { digit: "1", arabic: "١", x: 25, y: 5, side: "left", current: true, arabicX: 67, arabicY: 120 },
    { digit: "3", arabic: "٣", x: 25, y: 218, side: "left", arabicX: 69, arabicY: 124 },
    { digit: "2", arabic: "٢", x: 181, y: 218, side: "right", arabicX: 69, arabicY: 123 },
    { digit: "5", arabic: "٥", x: 25, y: 430, side: "left", arabicX: 69, arabicY: 120 },
    { digit: "4", arabic: "٤", x: 181, y: 430, side: "right", arabicX: 69, arabicY: 120 },
    { digit: "6", arabic: "٦", x: 181, y: 643, side: "right", arabicX: 68, arabicY: 123 },
];

const Sheet = ({ page }: { page: DocPage }) => (
    <div
        className={`absolute w-[157px] h-[203px] bg-white border shadow-[1px_1px_0_#55575a] ${
            page.current ? "border-[#ff0000]" : "border-black"
        }`}
        style={{ left: page.x, top: page.y }}
    >
        <div
            className={`absolute top-[9px] w-[139px] h-[183px] border border-[#0000ff] ${
                page.side === "left" ? "left-1" : "left-[13px]"
            }`}
        />
        <div className="absolute left-[68px] top-[71px] w-[31px] h-[49px] border border-black text-[26px] leading-[28px] text-black">
            {page.digit}
        </div>
        <div
            lang="ar"
            className="absolute w-[31px] h-[49px] border border-black pl-px text-[20px] leading-[22px] font-bold text-black font-['DejaVu_Sans',sans-serif]"
            style={{ left: page.arabicX, top: page.arabicY }}
        >
            {page.arabic}
        </div>
        <div className="absolute left-[68px] top-[193px] w-5 h-2 border border-black text-[6px] leading-[6px] text-[#444]">
            {page.digit}
        </div>
    </div>
);

const titleButton =
    "size-[19px] shrink-0 flex items-center justify-center rounded-[3px] border border-[#2a78a8] bg-gradient-to-b from-[#52c0fb] to-[#3aa2dc]";

const DocumentWindow = () => (
    <div className="flex-1 min-w-0 flex flex-col -mr-2 -mb-[11px]">
        <div className="h-[25px] shrink-0 flex items-center gap-px pl-1 pr-px rounded-tl-[5px] border border-[#2b6b93] bg-gradient-to-b from-[#4fc1ff] to-[#3ba5df]">
            <Feather size={18} />
            <h2 className="flex-1 text-center text-white whitespace-nowrap [text-shadow:1px_1px_0_#2a5f80]">
                /home/fahad/dev/facing/facing.sla*
            </h2>
            <button type="button" aria-label="Minimize document" className={titleButton}>
                <span className="w-2 h-[2px] mt-[6px] bg-white" />
            </button>
            <button type="button" aria-label="Maximize document" className={titleButton}>
                <span className="size-2 border border-t-2 border-white" />
            </button>
            <button type="button" aria-label="Close document" className={titleButton}>
                <svg width="9" height="9" viewBox="0 0 9 9" aria-hidden="true">
                    <path d="M1 1l7 7M8 1L1 8" stroke="#fff" strokeWidth="2" />
                </svg>
            </button>
        </div>
        <div className="flex-1 flex flex-col border-l-4 border-r border-[#f7f8fa]">
            <div className="flex-1 flex border-l border-[#b3b5b8]">
                <div className="flex-1 min-w-0 flex flex-col">
                    <div className="h-6 shrink-0 flex bg-white">
                        <svg width="24" height="24" viewBox="0 0 24 24" className="shrink-0 bg-[#e9ecf2]" aria-hidden="true">
                            <path d="M0 11.500h24M12.500 0v24" stroke={INK} strokeDasharray="3 2" />
                            <path d="M8 11.500h9M12.500 7v9" stroke={INK} />
                        </svg>
                        <div className="flex-1 min-w-0 h-6 overflow-hidden">
                            <HorizontalRuler />
                        </div>
                    </div>
                    <div className="flex-1 flex">
                        <div className="w-6 shrink-0 bg-white relative overflow-hidden">
                            <div className="absolute inset-0">
                                <VerticalRuler />
                            </div>
                        </div>
                        <div className="flex-1 relative overflow-hidden bg-[#e9ecf2]">
                            {docPages.map((page) => (
                                <Sheet key={page.digit} page={page} />
                            ))}
                        </div>
                    </div>
                </div>
                <div className="w-[14px] shrink-0 flex flex-col border-l border-[#b3b5b8]">
                    <ScrollArrow dir="up" />
                    <div className="flex-1 bg-white border-y border-[#b3b5b8]" />
                    <div className="h-[26px] bg-[#f1f1f1] border-b border-[#b3b5b8]" />
                    <ScrollArrow dir="down" />
                </div>
            </div>
            <div className="h-[14px] shrink-0 flex border-t border-[#b3b5b8]">
                <ScrollArrow dir="left" />
                <div className="w-[142px] bg-white border-x border-[#b3b5b8]" />
                <div className="flex-1 bg-[#f1f1f1] border-r border-[#b3b5b8]" />
                <ScrollArrow dir="right" />
            </div>
        </div>
    </div>
);

const Workspace = () => (
    <main className="flex-1 min-w-0 flex flex-col border-l-2 border-r-2 border-[#a0a3a5] pt-px">
        <div className="flex-1 flex">
            <div className="flex-1 min-w-0 flex overflow-hidden">
                <DocumentWindow />
            </div>
            <div className="w-[14px] shrink-0 flex flex-col border-l border-[#b3b5b8]">
                <ScrollArrow dir="up" />
                <div className="flex-1 bg-white border-y border-[#b3b5b8]" />
                <div className="h-[15px] bg-[#f1f1f1] border-b border-[#b3b5b8]" />
                <ScrollArrow dir="down" />
            </div>
        </div>
        <div className="h-[14px] shrink-0 flex border-t border-[#b3b5b8]">
            <ScrollArrow dir="left" />
            <div className="flex-1 bg-white border-x border-[#b3b5b8]" />
            <div className="w-[10px] bg-[#f1f1f1] border-r border-[#b3b5b8]" />
            <ScrollArrow dir="right" />
            <div className="w-[14px] border-l border-[#b3b5b8]" />
        </div>
    </main>
);

/* ---------- right side ---------- */

const SideButton = ({ name, children }: { name: string; children: React.ReactNode }) => (
    <button
        type="button"
        aria-label={name}
        className="size-6 flex items-center justify-center rounded-[3px] border border-[#b1b3b5] bg-white"
    >
        {children}
    </button>
);

const RightDock = () => (
    <aside className="w-[60px] shrink-0 relative border-t border-[#a7a8a9]">
        <div className="h-6 flex bg-[#a7a8a9]">
            <div className="w-[18px] bg-[#e9ecf2] flex items-center pl-2 overflow-hidden">
                <svg width="16" height="15" viewBox="0 0 16 15" className="shrink-0" aria-hidden="true">
                    <path d="M8 0l2.200 5H16l-4.500 4 1.700 6L8 11.500 2.800 15l1.700-6L0 5h5.800z" fill={INK} />
                </svg>
            </div>
            <div className="flex-1 flex items-center justify-between pl-[5px] pr-[7px]">
                <Caret />
                <Pin />
            </div>
        </div>
        <div className="flex justify-between px-[3px] pt-[3px]">
            <SideButton name="Open">
                <svg width="16" height="14" viewBox="0 0 16 14" aria-hidden="true">
                    <path d="M0 0h6l2 2h8v12H0z" fill={INK} />
                    <path d="M1 1h4.500l2 2H15v1H1z" fill="#fff" />
                </svg>
            </SideButton>
            <SideButton name="Close">
                <svg width="12" height="12" viewBox="0 0 12 12" aria-hidden="true">
                    <path d="M1 1l10 10M11 1L1 11" stroke={INK} strokeWidth="2.200" />
                </svg>
            </SideButton>
        </div>
        {/* Mouse pointer */}
        <svg width="12" height="19" viewBox="0 0 12 19" className="absolute left-[19px] top-[294px]" aria-hidden="true">
            <path d="M0.500 0.500V15.500L3.800 12.500L6.500 18.500L9.200 17.200L6.500 11.500L11 11Z" fill="#33363a" stroke="#77797c" />
        </svg>
    </aside>
);

const verticalTab =
    "flex flex-col items-center gap-[3px] w-6 pt-[3px] pb-[5px] rounded-[3px] border border-[#b1b3b5] bg-white";

const SideTabs = () => (
    <nav className="w-6 shrink-0 flex flex-col gap-3">
        <button type="button" className={verticalTab}>
            <svg width="16" height="16" viewBox="0 0 16 16" fill="none" stroke={INK} aria-hidden="true">
                <path d="M2.500 9V2.500H13.500V13.500H8" />
                <path d="M1 1h3v3H1zM12 1h3v3h-3zM12 12h3v3h-3z" fill={INK} stroke="none" />
                <circle cx="4" cy="12.500" r="2" stroke="#55585b" strokeWidth="2" />
            </svg>
            <span className="[writing-mode:vertical-rl]">Properties</span>
        </button>
        <button type="button" className={verticalTab}>
            <svg width="16" height="16" viewBox="0 0 16 16" fill="none" stroke="#8b8d90" aria-hidden="true">
                <path d="M2.500 9V2.500H13.500V13.500H8" strokeWidth="1.500" />
                <path d="M1 1h3v3H1zM12 1h3v3h-3zM12 12h3v3h-3z" fill="#8b8d90" stroke="none" />
                <path d="M5 5h6v6H5z" fill="#55585b" stroke="none" />
                <path d="M9 4v6" stroke={INK} strokeWidth="2" />
                <circle cx="4" cy="12.500" r="2" stroke="#55585b" strokeWidth="2" />
            </svg>
            <span className="[writing-mode:vertical-rl]">Content Properties</span>
        </button>
    </nav>
);

/* ---------- status bar ---------- */

const ZoomGlyph = ({ children }: { children: React.ReactNode }) => (
    <svg width="16" height="16" viewBox="0 0 16 16" fill="none" stroke={INK} strokeWidth="1.300" aria-hidden="true">
        <circle cx="7" cy="7" r="5.500" />
        <path d="M11 11l3.500 3.500" strokeWidth="2" />
        {children}
    </svg>
);

const ArrowGlyph = ({ color, flip = false, bar = false }: { color: string; flip?: boolean; bar?: boolean }) => (
    <svg width="15" height="12" viewBox="0 0 15 12" aria-hidden="true">
        <g transform={flip ? "translate(15 0) scale(-1 1)" : undefined} fill={color}>
            <path d="M1 5h7V2l5.500 4L8 10V7H1z" />
            {bar && <path d="M14 1h1v10h-1z" />}
        </g>
    </svg>
);

const Combo = ({
    label,
    value,
    width,
    text,
    swatch = false,
}: {
    label: string;
    value: string;
    width: string;
    text: string;
    swatch?: boolean;
}) => (
    <label className={`${width} h-[22px] shrink-0 flex items-center relative bg-white border border-[#808386]`}>
        {swatch && <span className="w-4 h-3 ml-[5px] shrink-0 bg-black" />}
        <select
            aria-label={label}
            defaultValue={value}
            className={`${text} min-w-0 flex-1 h-full appearance-none bg-transparent outline-none`}
        >
            <option>{value}</option>
        </select>
        <span className="w-4 h-full shrink-0 flex items-center justify-center border-l border-[#808386] pointer-events-none">
            <svg width="8" height="10" viewBox="0 0 8 10" aria-hidden="true">
                <path d="M2.500 0h3v5H8L4 10 0 5h2.500z" fill={INK} />
            </svg>
        </span>
    </label>
);

const StatusBar = () => (
    <footer className="h-[28px] shrink-0 flex items-center pl-[86px] pt-[2px] text-[9px] text-[#35393d] relative">
        <span className="w-[62px] h-5 shrink-0 flex items-start overflow-hidden bg-white border border-[#b1b3b5] rounded-[3px]">
            <input
                type="text"
                aria-label="Zoom"
                defaultValue="٢٠,٠٠ %"
                className="min-w-0 flex-1 h-[11px] pl-1 leading-[11px] outline-none font-['Liberation_Sans','DejaVu_Sans_Condensed','DejaVu_Sans',sans-serif]"
            />
            <SpinArrows />
        </span>
        <div className="flex gap-[7px] ml-[5px] shrink-0">
            <button type="button" aria-label="Zoom out">
                <ZoomGlyph>
                    <path d="M4 7h6" strokeWidth="1.800" />
                </ZoomGlyph>
            </button>
            <button type="button" aria-label="Zoom to 100%">
                <ZoomGlyph>
                    <circle cx="7" cy="7" r="1.200" fill={INK} />
                </ZoomGlyph>
            </button>
            <button type="button" aria-label="Zoom in">
                <ZoomGlyph>
                    <path d="M4 7h6M7 4v6" strokeWidth="1.800" />
                </ZoomGlyph>
            </button>
        </div>
        <div className="flex gap-[6px] ml-[10px] mr-1 shrink-0">
            <button type="button" aria-label="First page">
                <ArrowGlyph color={GRAY} flip bar />
            </button>
            <button type="button" aria-label="Previous page">
                <ArrowGlyph color={GRAY} flip />
            </button>
        </div>
        <Combo label="Current page" value="1" width="w-[62px]" text="pr-1 text-xs text-center" />
        <span className="ml-1 mr-1 whitespace-nowrap">of 6</span>
        <div className="flex gap-[7px] shrink-0">
            <button type="button" aria-label="Next page">
                <ArrowGlyph color={INK} />
            </button>
            <button type="button" aria-label="Last page">
                <ArrowGlyph color={INK} bar />
            </button>
        </div>
        <span className="w-2 shrink-0" />
        <Combo label="Layer" value="Background" width="w-[104px]" text="pl-[3px]" swatch />
        <p className="ml-10 w-[64px] shrink-0 flex whitespace-nowrap">
            <span className="w-[14px]">X:</span>
            <span className="font-['DejaVu_Sans_Condensed','DejaVu_Sans',sans-serif]">١٩,٢٠٨٩</span>
        </p>
        <p className="w-[64px] shrink-0 flex whitespace-nowrap">
            <span className="w-[14px]">Y:</span>
            <span className="font-['DejaVu_Sans_Condensed','DejaVu_Sans',sans-serif]">١٣,٠٠٠٠</span>
        </p>
        <Combo label="Unit" value="in" width="w-12" text="pl-1" />
        <input
            type="text"
            aria-label="Status message"
            className="ml-[6px] mr-6 min-w-0 flex-1 h-[18px] bg-white border border-[#b1b3b5] rounded-[3px] outline-none"
        />
        <svg width="11" height="11" viewBox="0 0 11 11" className="absolute right-[2px] bottom-[2px]" aria-hidden="true">
            <path
                d="M9 0h1v1H9zM9 3h1v1H9zM6 3h1v1H6zM9 6h1v1H9zM6 6h1v1H6zM3 6h1v1H3zM9 9h1v1H9zM6 9h1v1H6zM3 9h1v1H3zM0 9h1v1H0z"
                fill="#a0a3a6"
            />
        </svg>
    </footer>
);

/* ---------- main window ---------- */

const menus = ["File", "Edit", "Item", "Insert", "Page", "Table", "Extras", "View", "Script", "Windows", "Help"];
const mnemonics: Record<string, number> = { Insert: 1, Extras: 1 };

const App = () => (
    <div className="min-h-screen flex p-5 bg-white font-['Liberation_Sans',Arial,sans-serif] text-xs text-[#232629]">
        <div className="flex-1 min-w-0 flex flex-col bg-[#e9ecf2] rounded-t-[3px] shadow-[0_2px_14px_1px_rgba(0,0,0,0.45)]">
            <header className="h-7 shrink-0 flex items-center px-1 bg-[#dce2ec] rounded-t-[3px]">
                <div className="w-16">
                    <Feather size={20} />
                </div>
                <h1 className="flex-1 text-center text-[13px] font-['Noto_Sans',sans-serif]">Scribus 1.7.1.svn</h1>
                <div className="w-16 flex items-center justify-end gap-3 pr-1">
                    <button type="button" aria-label="Minimize">
                        <svg width="12" height="12" viewBox="0 0 12 12" fill="none" stroke={INK} strokeWidth="1.200" aria-hidden="true">
                            <path d="M0.500 3.500L6 9l5.500-5.500" />
                        </svg>
                    </button>
                    <button type="button" aria-label="Maximize">
                        <svg width="12" height="12" viewBox="0 0 12 12" fill="none" stroke={INK} strokeWidth="1.200" aria-hidden="true">
                            <path d="M0.500 8.500L6 3l5.500 5.500" />
                        </svg>
                    </button>
                    <button type="button" aria-label="Close">
                        <svg width="12" height="12" viewBox="0 0 12 12" fill="none" stroke={INK} strokeWidth="1.200" aria-hidden="true">
                            <path d="M1.500 1.500l9 9M10.500 1.500l-9 9" />
                        </svg>
                    </button>
                </div>
            </header>

            <nav className="h-[19px] shrink-0 flex items-center gap-[15px] pl-[10px] border-b border-[#c6c9ce]">
                {menus.map((menu) => {
                    const at = mnemonics[menu] ?? 0;

                    return (
                        <button key={menu} type="button" className="leading-4">
                            {menu.slice(0, at)}
                            <u className="underline-offset-2">{menu[at]}</u>
                            {menu.slice(at + 1)}
                        </button>
                    );
                })}
            </nav>

            <MainToolbar />

            <div className="flex-1 flex pt-px">
                <Toolbox />
                <div className="flex-1 min-w-0 flex border-b border-[#a7a8a9]">
                    <div className="w-[292px] shrink-0 flex flex-col border-l border-[#a7a8a9]">
                        <ArrangePages />
                        <AlignDistribute />
                    </div>
                    <Workspace />
                    <RightDock />
                </div>
                <SideTabs />
            </div>

            <StatusBar />
        </div>
    </div>
);

export default App;
